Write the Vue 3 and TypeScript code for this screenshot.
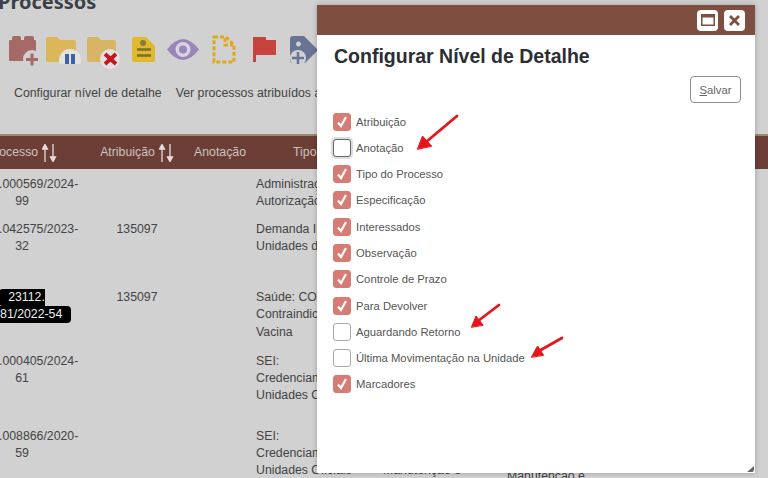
<script setup lang="ts">
interface Row {
  id: string
  process: string
  attribution: string
  type: string
  fourth: string
  fifth: string
  marked?: boolean
}

const rows: Row[] = [
  { id: 'a', process: '23112.000569/2024-\n99', attribution: '', type: 'Administração:\nAutorização', fourth: '', fifth: '' },
  { id: 'b', process: '23112.042575/2023-\n32', attribution: '135097', type: 'Demanda IFES:\nUnidades de TI', fourth: '', fifth: '' },
  { id: 'c', process: '', marked: true, attribution: '135097', type: 'Saúde: COVID:\nContraindicação de\nVacina', fourth: '', fifth: '' },
  { id: 'd', process: '23112.000405/2024-\n61', attribution: '', type: 'SEI:\nCredenciamento\nUnidades Oficiais', fourth: '', fifth: '' },
  { id: 'e', process: '23112.008866/2020-\n59', attribution: '', type: 'SEI:\nCredenciamento\nUnidades Oficiais', fourth: 'Manutenção e', fifth: 'Manutenção e' }
]

const options = [
  { label: 'Atribuição', checked: true },
  { label: 'Anotação', checked: false, focused: true },
  { label: 'Tipo do Processo', checked: true },
  { label: 'Especificação', checked: true },
  { label: 'Interessados', checked: true },
  { label: 'Observação', checked: true },
  { label: 'Controle de Prazo', checked: true },
  { label: 'Para Devolver', checked: true },
  { label: 'Aguardando Retorno', checked: false },
  { label: 'Última Movimentação na Unidade', checked: false },
  { label: 'Marcadores', checked: true }
]
</script>

<template>
  <div class="page">
    <h1 class="title">Processos</h1>

    <div class="toolbar">
      <svg class="tool" viewBox="0 0 40 40">
        <path fill="#a56a66" d="M6 11q0-1 1-1h2V8q0-2 2-2h5q2 0 2 2v2h3V8q0-2 2-2h6q2 0 2 2v2h1q1 0 1 1v19q0 1-1 1H7q-1 0-1-1z" />
        <circle cx="29" cy="29" r="9" fill="#d1d1d1" />
        <path stroke="#a56a66" stroke-width="3" d="M23 29.500h12M29 23.500v12" />
      </svg>
      <svg class="tool" viewBox="0 0 40 40">
        <path fill="#dcb75a" d="M3 9q0-2 2-2h9l3 3h14q2 0 2 2v18q0 2-2 2H5q-2 0-2-2z" />
        <circle cx="27" cy="30" r="11" fill="#e2e2e2" />
        <path fill="#3d63a0" d="M22 24h4v10h-4zM28 24h4v10h-4z" />
        <rect y="34" width="40" height="6" fill="#d1d1d1" />
      </svg>
      <svg class="tool" viewBox="0 0 40 40">
        <path fill="#d6b566" d="M4 9q0-2 2-2h9l3 3h13q2 0 2 2v18q0 2-2 2H6q-2 0-2-2z" />
        <circle cx="27" cy="29" r="10" fill="#e2e2e2" />
        <path stroke="#c8141c" stroke-width="3.800" d="M22 24l11 10M33 24L22 34" />
      </svg>
      <svg class="tool" viewBox="0 0 40 40">
        <path fill="#e1b92e" d="M9 9q0-2 2-2h12l9 9v14q0 2-2 2H11q-2 0-2-2z" />
        <circle cx="20" cy="13" r="3" fill="#8a7a3a" />
        <path stroke="#7d6e30" stroke-width="2.500" d="M14 19.500h14M14 25.500h14" />
      </svg>
      <svg class="tool" viewBox="0 0 40 40">
        <path fill="#9a85b8" d="M4 19.500Q12 9 20 9t16 10.500Q28 30 20 30T4 19.500z" />
        <circle cx="20" cy="19.500" r="7.500" fill="#d8d4e0" />
        <circle cx="20" cy="19.500" r="4" fill="#9a85b8" />
      </svg>
      <svg class="tool" viewBox="0 0 40 40">
        <path fill="none" stroke="#e0a91c" stroke-width="3" stroke-dasharray="4 2" d="M11 7h12l8 8v17H11z" />
        <path fill="none" stroke="#e0a91c" stroke-width="3" stroke-dasharray="4 2" d="M22 8v7h8" />
      </svg>
      <svg class="tool" viewBox="0 0 40 40">
        <path fill="#c8423e" d="M10 7h13v3h10v15H13v7h-3z" />
      </svg>
      <svg class="tool" viewBox="0 0 40 40">
        <path fill="#6a7396" fill-rule="evenodd" d="M7 9q0-3 3-3h11l14 14-13 13H10q-3 0-3-3zM13 14a2.500 2.500 0 1 0 0-.1z" />
        <circle cx="15" cy="28" r="8" fill="#d1d1d1" />
        <path stroke="#6a7396" stroke-width="2.500" d="M9 28h12M15 22v12" />
      </svg>
    </div>

    <nav class="links">
      <span>Configurar nível de detalhe</span>
      <span>Ver processos atribuídos a mim</span>
    </nav>

    <div class="table">
      <div class="th">
        Processo
        <svg class="sort" viewBox="0 0 15 18"><path d="M3 18V3M0.500 5L3 0.500 5.500 5zM11 0v15M8.500 13l2.500 4.500 2.500-4.500z" /></svg>
      </div>
      <div class="th">
        Atribuição
        <svg class="sort" viewBox="0 0 15 18"><path d="M3 18V3M0.500 5L3 0.500 5.500 5zM11 0v15M8.500 13l2.500 4.500 2.500-4.500z" /></svg>
      </div>
      <div class="th">Anotação</div>
      <div class="th start">Tipo</div>
      <div class="th"></div>
      <div class="th"></div>

      <template v-for="row in rows" :key="row.id">
        <div class="td center">
          <template v-if="row.marked"><span class="marked">23112.<br />000781/2022-54</span></template>
          <template v-else>{{ row.process }}</template>
        </div>
        <div class="td center">{{ row.attribution }}</div>
        <div class="td"></div>
        <div class="td">{{ row.type }}</div>
        <div class="td fourth">{{ row.fourth }}</div>
        <div class="td fifth">{{ row.fifth }}</div>
      </template>
    </div>

    <section class="modal">
      <header class="modal-bar">
        <button class="win-btn" aria-label="Maximizar">
          <svg width="14" height="12" viewBox="0 0 14 12"><path fill="none" stroke="#7e4e41" stroke-width="1.500" d="M.8.800h12.400v10.400H.8z" /><path fill="#7e4e41" d="M0 0h14v3.500H0z" /></svg>
        </button>
        <button class="win-btn" aria-label="Fechar">
          <svg width="11" height="11" viewBox="0 0 11 11"><path stroke="#7e4e41" stroke-width="2.800" d="M1 1l9 9M10 1l-9 9" /></svg>
        </button>
      </header>

      <div class="modal-body">
        <h2 class="modal-title">Configurar Nível de Detalhe</h2>
        <div class="actions">
          <button class="save"><u>S</u>alvar</button>
        </div>
        <ul class="options">
          <li v-for="option in options" :key="option.label" class="option">
            <span class="box" :class="{ checked: option.checked, focused: option.focused }">
              <svg v-if="option.checked" width="14" height="14" viewBox="0 0 14 14"><path fill="none" stroke="#fff" stroke-width="2.200" d="M3 7.500l3 3.500 5-9" /></svg>
            </span>
            <span class="label">{{ option.label }}</span>
          </li>
        </ul>
      </div>

      <svg class="grip" width="8" height="8" viewBox="0 0 8 8"><path fill="#666" d="M7 1v4q0 2-2 2H0z" /></svg>
    </section>

    <svg class="arrows" width="768" height="478" viewBox="0 0 768 478">
      <g fill="#e8141c" stroke="#e8141c" stroke-linecap="round" stroke-linejoin="round">
        <path stroke-width="2.800" fill="none" d="M457 116L426 142" />
        <path stroke-width="1" d="M417.500 149l5-13 9 10z" />
        <path stroke-width="2.800" fill="none" d="M499 305L478 321" />
        <path stroke-width="1" d="M471.500 327l4.500-11 7 9z" />
        <path stroke-width="2.800" fill="none" d="M562 338L539 351" />
        <path stroke-width="1" d="M531.500 357l6-11 6 9z" />
      </g>
    </svg>
  </div>
</template>

<style scoped>
.page {
  position: relative;
  width: 768px;
  height: 478px;
  overflow: hidden;
  background: #d1d1d1;
  color: #444;
  font-family: "Liberation Sans", Arial, sans-serif;
  font-size: 12.300px;
}

.title {
  margin: -12px 0 0 -2px;
  height: 27px;
  font-family: "Noto Sans", sans-serif;
  font-size: 20px;
  line-height: 27px;
  font-weight: 700;
  color: #3c4048;
}

.toolbar {
  display: flex;
  margin: 15px 0 0 3px;
  height: 40px;
}

.tool {
  width: 40px;
  height: 40px;
  flex: none;
}

.links {
  display: flex;
  gap: 14px;
  margin: 14px 0 0 14px;
  height: 18px;
  line-height: 18px;
  white-space: nowrap;
}

.table {
  display: grid;
  grid-template-columns: 124px 106px 60px 127px 124px 1fr;
  grid-template-rows: 33px 45px 68px 63.500px 75px 60px;
  width: 808px;
  margin: 32px 0 0 -40px;
  border-top: 2px solid #998a72;
  line-height: 17.300px;
}

.th {
  display: flex;
  align-items: center;
  justify-content: center;
  gap: 4px;
  background: #6d3e36;
  color: #c9c2bf;
  white-space: nowrap;
}

.th.start {
  justify-content: flex-start;
  padding-left: 43px;
}

.sort {
  width: 15px;
  height: 18px;
  fill: #e4dedb;
  stroke: #e4dedb;
  stroke-width: 1.300;
}

.td {
  padding: 7px 0 0 6px;
  white-space: pre-line;
}

.td.center {
  padding-left: 0;
  text-align: center;
}

.fourth {
  padding-top: 41.500px;
}

.fifth {
  padding-top: 47px;
}

.marked {
  padding: 1px 9px 2px;
  border-radius: 4px;
  background: #000;
  color: #eee;
}

.modal {
  position: absolute;
  left: 317px;
  top: 5px;
  width: 438px;
  height: 468px;
  background: #fff;
  box-shadow: 0 0 5px rgba(0, 0, 0, 0.25);
}

.modal-bar {
  display: flex;
  justify-content: flex-end;
  align-items: center;
  gap: 6px;
  height: 30px;
  padding-right: 10px;
  background: #7e4e41;
}

.win-btn {
  display: flex;
  align-items: center;
  justify-content: center;
  width: 21px;
  height: 21px;
  padding: 0;
  border: 0;
  border-radius: 4px;
  background: #fff;
}

.modal-body {
  padding: 8px 14px 0 17px;
}

.modal-title {
  margin: 0;
  height: 26px;
  font-size: 19.500px;
  line-height: 26px;
  font-weight: 700;
  color: #2b2e33;
}

.actions {
  display: flex;
  justify-content: flex-end;
  margin-top: 7px;
}

.save {
  width: 51px;
  height: 27px;
  padding: 0;
  border: 1px solid #8f8f8f;
  border-radius: 4px;
  background: #fff;
  color: #666;
  font-family: inherit;
  font-size: 11.300px;
}

.options {
  display: flex;
  flex-direction: column;
  gap: 8.300px;
  margin: 9.500px 0 0;
  padding: 0;
  list-style: none;
}

.option {
  display: flex;
  align-items: center;
  gap: 5px;
  height: 18px;
  color: #555;
  font-size: 11.250px;
}

.box {
  display: flex;
  align-items: center;
  justify-content: center;
  box-sizing: border-box;
  width: 18px;
  height: 18px;
  margin-left: -1px;
  border: 1px solid #a8a8a8;
  border-radius: 3px;
  background: #fff;
}

.box.checked {
  border-color: #d77c74;
  background: #d77c74;
}

.box.focused {
  border-color: #666;
  box-shadow: 0 0 0 2px #ddd;
}

.grip {
  position: absolute;
  right: 0;
  bottom: 0;
}

.arrows {
  position: absolute;
  left: 0;
  top: 0;
  pointer-events: none;
}
</style>
